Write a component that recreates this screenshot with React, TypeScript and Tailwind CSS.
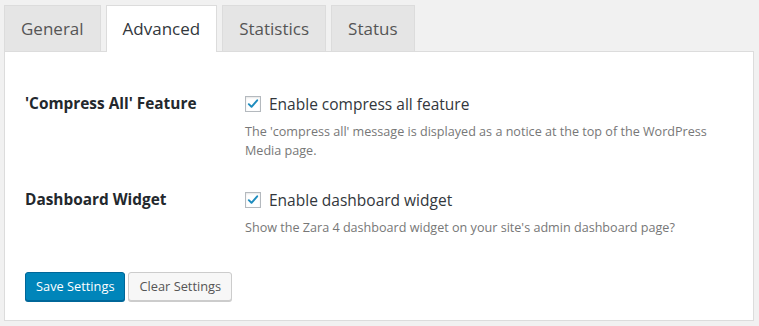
import React from "react";

const tabs = ["General", "Advanced", "Statistics", "Status"];

const Checkbox: React.FC = () => (
  <span className="flex h-4 w-4 shrink-0 items-center justify-center border border-[#b4b9be] bg-white shadow-[inset_0_1px_2px_rgba(0,0,0,0.1)]">
    <svg viewBox="0 0 16 16" className="h-[14px] w-[14px]">
      <path
        d="M3.2 8.2 L6.3 11.2 L12.8 3.8"
        fill="none"
        stroke="#1e8cbe"
        strokeWidth="2.2"
        strokeLinecap="round"
        strokeLinejoin="round"
      />
    </svg>
  </span>
);

const SettingRow: React.FC<{ label: string; option: string; help: React.ReactNode }> = ({
  label,
  option,
  help,
}) => (
  <div className="flex">
    <div className="w-[220px] shrink-0 text-[15.4px] leading-6 font-bold text-[#23282d]">{label}</div>
    <div className="flex-1">
      <label className="flex items-center gap-2 text-[15.5px] leading-6 text-[#32373c]">
        <Checkbox />
        <span>{option}</span>
      </label>
      <p className="mt-[6px] text-[12.6px] leading-[19px] text-[#777]">{help}</p>
    </div>
  </div>
);

export default function App() {
  return (
    <div className="h-[326px] w-[759px] bg-[#f1f1f1] pt-[5px] pl-1 pr-[5px] font-['Open_Sans',sans-serif]">
      <div className="flex gap-[5px]">
        {tabs.map((t) => (
          <div
            key={t}
            className={
              t === "Advanced"
                ? "relative z-10 -mb-px flex h-[47px] items-center border border-b-0 border-[#dcdcdc] bg-white px-[16px] text-[17px] text-[#32373c]"
                : "flex h-[46px] items-center border border-b-0 border-[#dcdcdc] bg-[#e5e5e5] px-[16px] text-[17px] text-[#555]"
            }
          >
            {t}
          </div>
        ))}
      </div>
      <div className="h-[270px] border border-[#dcdcdc] bg-white px-5 pt-10">
        <SettingRow
          label="'Compress All' Feature"
          option="Enable compress all feature"
          help={
            <>
              The 'compress all' message is displayed as a notice at the top of the WordPress
              <br />
              Media page.
            </>
          }
        />
        <div className="mt-[28px]">
          <SettingRow
            label="Dashboard Widget"
            option="Enable dashboard widget"
            help="Show the Zara 4 dashboard widget on your site's admin dashboard page?"
          />
        </div>
        <div className="mt-[35px] flex gap-[3px]">
          <button className="h-[29px] rounded-[3px] border border-[#006799] bg-[#0085ba] px-[10px] text-[12.8px] text-white shadow-[0_1px_0_#006799]">
            Save Settings
          </button>
          <button className="h-[29px] rounded-[3px] border border-[#cccccc] bg-[#f7f7f7] px-[10px] text-[12.8px] text-[#555] shadow-[0_1px_0_#cccccc]">
            Clear Settings
          </button>
        </div>
      </div>
    </div>
  );
}
